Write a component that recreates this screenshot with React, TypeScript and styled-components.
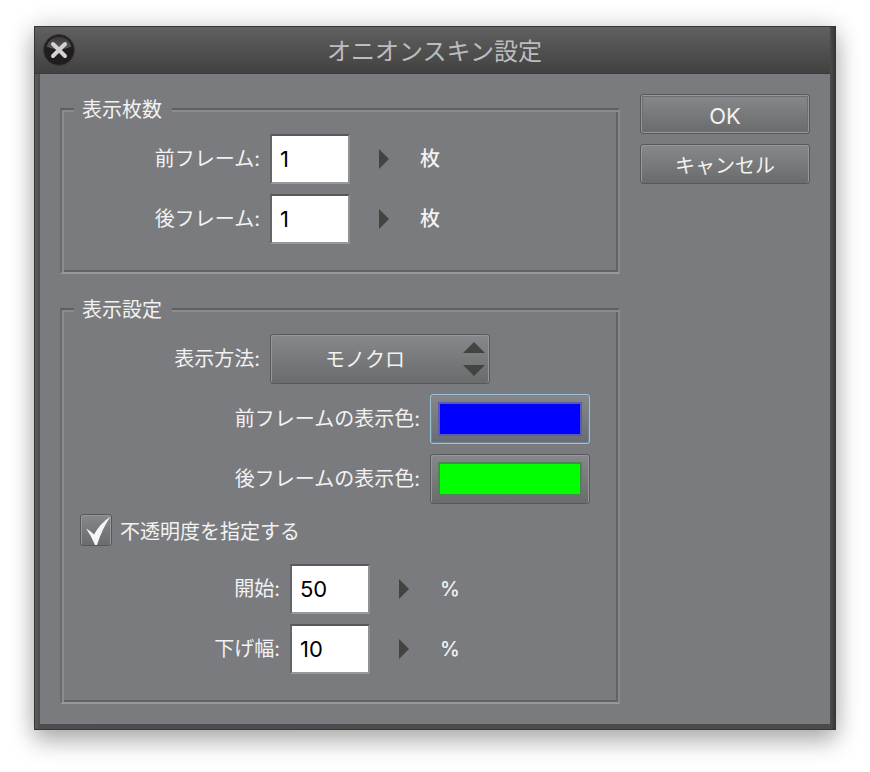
import React, { useState } from "react";
import styled, { createGlobalStyle, css } from "styled-components";

const GlobalStyle = createGlobalStyle`
  *, *::before, *::after { box-sizing: border-box; }
  body {
    margin: 0;
    background: #fff;
    font-family: Inter, "Noto Sans CJK JP", sans-serif;
    font-size: 20px;
    line-height: 22px;
    color: #f2f2f2;
  }
  button, input, select { font: inherit; color: inherit; }
`;

const surface = "#7a7b7e";
const arrow = "#434341";

const raised = css`
  border: 1px solid #58595b;
  border-radius: 3px;
  background: linear-gradient(#87888b, #696b6c);
  box-shadow: inset 1px 1px 0 #96979a, inset -1px 0 0 #96979a;
`;

const Desktop = styled.main`
  padding: 26px 34px 42px;
`;

const Dialog = styled.section`
  border: 1px solid #363636;
  background: linear-gradient(90deg, #5a5c5e, #4b4d4e 5px, #4b4b4b calc(100% - 5px), #383838);
  box-shadow: 0 0 24px rgba(0, 0, 0, 0.16), 0 12px 22px rgba(0, 0, 0, 0.26);
`;

const TitleBar = styled.header`
  display: grid;
  grid-template-columns: 1fr auto 1fr;
  align-items: center;
  height: 47px;
  margin-right: 5px;
  padding: 0 4px 0 8px;
  border-bottom: 1px solid #3a3a3a;
  background: linear-gradient(#606060, #414141);
`;

const Title = styled.h1`
  margin: 0;
  padding-top: 4px;
  font-size: 24px;
  font-weight: 400;
  line-height: 28px;
  color: #bdbdbd;
`;

const CloseButton = styled.button`
  display: block;
  width: 32px;
  height: 32px;
  padding: 0;
  border: 0;
  background: none;
  svg { display: block; }
`;

const Body = styled.form`
  display: flex;
  gap: 20px;
  margin: 0 5px 5px;
  padding: 20px;
  background: ${surface};
`;

const Groups = styled.div`
  flex: 1;
  display: flex;
  flex-direction: column;
  gap: 24px;
  padding-top: 4px;
`;

const Actions = styled.div`
  width: 170px;
  display: flex;
  flex-direction: column;
  gap: 10px;
`;

const ActionButton = styled.button<{ $primary?: boolean }>`
  ${raised}
  height: 40px;
  padding: 3px 0 0;
  ${(p) => p.$primary && css`
    font-size: 22px;
    box-shadow: inset 0 0 0 1px #96979a, inset 0 0 0 2px #6c6d70;
  `}
`;

const Group = styled.fieldset`
  min-width: 0;
  margin: 0;
  padding: 14px 18px 28px;
  border: 2px solid;
  border-color: #5e5f62 #88898c #98999c #68696c;
  box-shadow: inset 2px 2px 0 #8b8c8f, inset -2px -2px 0 #626366;
`;

const Legend = styled.legend`
  margin-left: -6px;
  padding: 2px 10px 0 8px;
  line-height: 20px;
  background: ${surface};
`;

const Rows = styled.div`
  display: flex;
  flex-direction: column;
  gap: 10px;
`;

const Row = styled.div`
  display: flex;
  align-items: center;
  gap: 10px;
`;

const labelWidths = { short: 180, medium: 200, long: 340 };

const Label = styled.label<{ $size: keyof typeof labelWidths }>`
  width: ${(p) => labelWidths[p.$size]}px;
  text-align: right;
  white-space: nowrap;
`;

const Unit = styled.span`
  font-weight: 500;
`;

const NumberBox = styled.input`
  width: 80px;
  height: 50px;
  padding: 0 8px;
  border: 2px solid;
  border-color: #58595c #909194 #98999c #646568;
  border-radius: 0;
  background: #fff;
  color: #000;
  font-size: 22px;
`;

const StepButton = styled.button`
  display: flex;
  align-items: center;
  justify-content: center;
  width: 50px;
  height: 50px;
  padding: 0 2px 0 0;
  border: 0;
  background: none;
`;

const SelectWrap = styled.div`
  position: relative;
  width: 220px;
`;

const Select = styled.select`
  ${raised}
  appearance: none;
  display: block;
  width: 100%;
  height: 50px;
  padding: 2px 30px 0 0;
  text-align: center;
  text-align-last: center;
`;

const SelectArrows = styled.svg`
  position: absolute;
  top: 7px;
  right: 5px;
  pointer-events: none;
`;

const ColorButton = styled.button<{ $focused?: boolean }>`
  ${raised}
  width: 160px;
  height: 50px;
  padding: 7px;
  ${(p) => p.$focused && css`
    border-color: #9fc3d6;
    background: linear-gradient(#858789, #686c76);
    box-shadow: inset 0 0 0 1px #71858f;
  `}
`;

const Swatch = styled.span<{ $color: string; $edge: string }>`
  display: block;
  height: 34px;
  border: 2px solid ${(p) => p.$edge};
  background: ${(p) => p.$color};
`;

const CheckRow = styled.label`
  display: flex;
  align-items: center;
  align-self: flex-start;
  gap: 8px;
  margin-bottom: 8px;
`;

const CheckText = styled.span`
  padding-top: 3px;
`;

const CheckHolder = styled.span`
  display: grid;
  width: 32px;
  height: 32px;
  > * { grid-area: 1 / 1; }
  svg { pointer-events: none; z-index: 1; }
`;

const CheckBox = styled.input`
  ${raised}
  appearance: none;
  width: 32px;
  height: 32px;
  margin: 0;
  & + svg { visibility: hidden; }
  &:checked + svg { visibility: visible; }
`;

function CloseIcon() {
  return (
    <svg width="32" height="32" viewBox="0 0 32 32" aria-hidden="true">
      <defs>
        <linearGradient id="gloss" x1="0" y1="0" x2="0" y2="1">
          <stop offset="0" stopColor="#3a3637" />
          <stop offset="1" stopColor="#5c5a5a" />
        </linearGradient>
      </defs>
      <circle cx="16" cy="16" r="15.5" fill="#211d1e" stroke="#3b3a3a" />
      <path d="M3.5 12.5a12.8 12.8 0 0 1 25 0q-5 2.500-12.500 2.500t-12.500-2.500z" fill="url(#gloss)" />
      <path d="M10 10l12 12M22 10L10 22" stroke="#d2d2d2" strokeWidth="4" strokeLinecap="round" />
    </svg>
  );
}

interface NumberRowProps {
  id: string;
  label: string;
  unit: string;
  initial: string;
  size: keyof typeof labelWidths;
}

function NumberRow({ id, label, unit, initial, size }: NumberRowProps) {
  const [value, setValue] = useState(initial);
  return (
    <Row>
      <Label htmlFor={id} $size={size}>{label}</Label>
      <NumberBox id={id} inputMode="numeric" value={value} onChange={(e) => setValue(e.target.value)} />
      <StepButton type="button" aria-label={label}>
        <svg width="10" height="20" viewBox="0 0 10 20" aria-hidden="true">
          <path d="M0 0L10 10L0 20z" fill={arrow} />
        </svg>
      </StepButton>
      <Unit>{unit}</Unit>
    </Row>
  );
}

export default function App() {
  return (
    <Desktop>
      <GlobalStyle />
      <Dialog role="dialog" aria-labelledby="title">
        <TitleBar>
          <CloseButton type="button" aria-label="閉じる"><CloseIcon /></CloseButton>
          <Title id="title">オニオンスキン設定</Title>
        </TitleBar>
        <Body onSubmit={(e) => e.preventDefault()}>
          <Groups>
            <Group>
              <Legend>表示枚数</Legend>
              <Rows>
                <NumberRow id="prev" label="前フレーム:" unit="枚" initial="1" size="short" />
                <NumberRow id="next" label="後フレーム:" unit="枚" initial="1" size="short" />
              </Rows>
            </Group>
            <Group>
              <Legend>表示設定</Legend>
              <Rows>
                <Row>
                  <Label htmlFor="method" $size="short">表示方法:</Label>
                  <SelectWrap>
                    <Select id="method" defaultValue="mono">
                      <option value="mono">モノクロ</option>
                    </Select>
                    <SelectArrows width="22" height="36" viewBox="0 0 22 36" aria-hidden="true">
                      <path d="M11 1L22 12H0zM0 24H22L11 35z" fill={arrow} />
                    </SelectArrows>
                  </SelectWrap>
                </Row>
                <Row>
                  <Label htmlFor="prev-color" $size="long">前フレームの表示色:</Label>
                  <ColorButton id="prev-color" type="button" $focused>
                    <Swatch $color="#0000ff" $edge="#5a5ab0" />
                  </ColorButton>
                </Row>
                <Row>
                  <Label htmlFor="next-color" $size="long">後フレームの表示色:</Label>
                  <ColorButton id="next-color" type="button">
                    <Swatch $color="#00ff00" $edge="#4f8552" />
                  </ColorButton>
                </Row>
                <CheckRow>
                  <CheckHolder>
                    <CheckBox type="checkbox" defaultChecked />
                    <svg width="32" height="32" viewBox="0 0 32 32" aria-hidden="true">
                      <path d="M6 14.500Q10 16.500 14 20.500Q20 9.500 30.500 2.500Q22 15 17 31H15Q11.500 22 6 14.500z" fill="#f6f6f6" />
                    </svg>
                  </CheckHolder>
                  <CheckText>不透明度を指定する</CheckText>
                </CheckRow>
                <NumberRow id="start" label="開始:" unit="%" initial="50" size="medium" />
                <NumberRow id="step" label="下げ幅:" unit="%" initial="10" size="medium" />
              </Rows>
            </Group>
          </Groups>
          <Actions>
            <ActionButton type="submit" $primary>OK</ActionButton>
            <ActionButton type="button">キャンセル</ActionButton>
          </Actions>
        </Body>
      </Dialog>
    </Desktop>
  );
}
